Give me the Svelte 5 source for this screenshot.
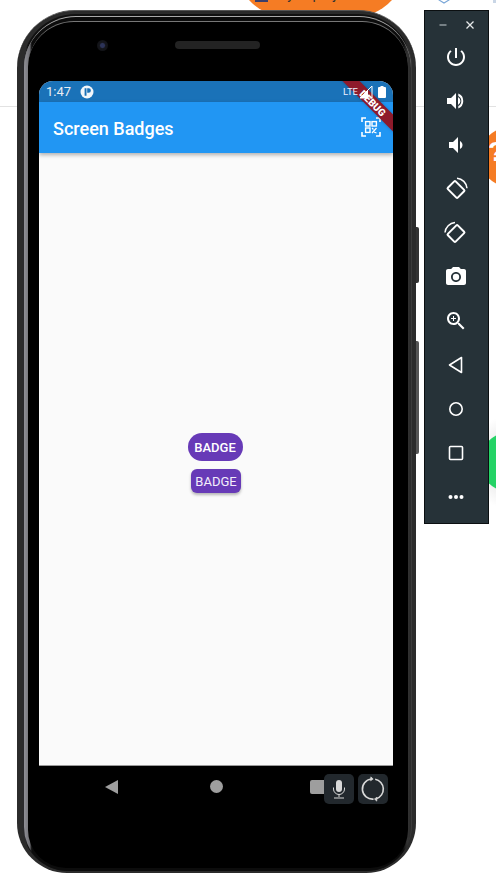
<script>
  const rows = ['power','up','down','rotL','rotR','camera','zoom','back','home','square','more'];
</script>

<div class="stage">
  <div class="rule"></div>
  <div class="blob orange-top">
    <span class="blob-icon"></span>
    <span class="blob-text">Sync project</span>
  </div>
  <svg class="hex" viewBox="0 0 12 12"><path d="M1 -3 L6 -6 L11 -3 V0 L6 3 L1 0Z" fill="#fff" stroke="#7aa7d8" stroke-width="1.2"/></svg>
  <div class="speck"></div>
  <div class="blob orange-right"><span>?</span></div>
  <div class="green-glow"></div>
  <div class="blob green"></div>

  <div class="side-btn power-btn"></div>
  <div class="side-btn vol-btn"></div>

  <div class="phone">
    <div class="ring-a">
      <div class="ring-b">
        <div class="ring-c">
          <div class="top-bezel">
            <div class="camera"></div>
            <div class="speaker"></div>
          </div>

          <div class="screen">
            <div class="status">
              <span class="time">1:47</span>
              <svg class="notif" viewBox="0 0 14 14"><circle cx="7" cy="7" r="6.5" fill="#f2f6fa"/><path d="M4.6 3.2h1.9v7.6H4.6z M7.2 3.2h1.4a2.3 2.3 0 0 1 0 4.6H7.2z" fill="#1a70b5"/></svg>
              <span class="grow"></span>
              <span class="lte">LTE</span>
              <svg class="signal" viewBox="0 0 14 14"><path d="M13 1V13H1Z" fill="none" stroke="#fff" stroke-width="1"/><path d="M9 5V13H1Z" fill="#fff"/></svg>
              <svg class="battery" viewBox="0 0 8 12"><path d="M2.5 0h3v1H7a1 1 0 0 1 1 1v9a1 1 0 0 1-1 1H1a1 1 0 0 1-1-1V2a1 1 0 0 1 1-1h1.5z" fill="#fff"/></svg>
            </div>
            <header class="appbar">
              <h1>Screen Badges</h1>
              <svg class="qr" viewBox="0 0 20 20" fill="none" stroke="#fff">
                <path d="M1 5V1H5 M15 1H19V5 M1 15V19H5 M15 19H19V15" stroke-width="1.6"/>
                <rect x="4.6" y="4.6" width="4.4" height="4.4" stroke-width="1.4"/>
                <rect x="11" y="4.6" width="4.4" height="4.4" stroke-width="1.4"/>
                <rect x="4.6" y="11" width="4.4" height="4.4" stroke-width="1.4"/>
                <path d="M11 11l1.5 1.5M15.5 11l-4.5 5M13 15l2.5 1" stroke-width="1.2"/>
              </svg>
            </header>
            <main class="body">
              <span class="badge pill">BADGE</span>
              <span class="badge rounded">BADGE</span>
            </main>
            <div class="ribbon"><span>DEBUG</span></div>
          </div>

          <nav class="nav">
            <svg class="nav-back" viewBox="0 0 13 14"><path d="M13 0V14L0 7Z" fill="#9e9e9e"/></svg>
            <span class="nav-home"></span>
            <span class="nav-square"></span>
          </nav>
          <div class="floats">
            <div class="float">
              <svg viewBox="0 0 24 24" width="24" height="24" fill="#d8d8d8">
                <rect x="9" y="3" width="6" height="12" rx="3"/>
                <path d="M6.5 10.5v1.5a5.5 5.5 0 0 0 11 0v-1.5" fill="none" stroke="#d8d8d8" stroke-width="1"/>
                <path d="M11.5 17.5h1V20h-1z M7 20.5h10v1H7z"/>
              </svg>
            </div>
            <div class="float">
              <svg viewBox="0 0 24 24" width="26" height="26" fill="none" stroke="#d8d8d8" stroke-width="1.5">
                <path d="M10.5 2.8A9.3 9.3 0 0 0 12.5 21.3"/>
                <path d="M15 21A9.3 9.3 0 0 0 14 3"/>
                <path d="M10 0.8l2.2 2-2.4 1.6z M15.5 23.2l-2.2-2 2.4-1.6z" fill="#d8d8d8" stroke-width="0.6"/>
              </svg>
            </div>
          </div>
        </div>
      </div>
    </div>
  </div>

  <aside class="panel">
    <div class="win">
      <svg viewBox="0 0 10 10" width="10" height="10"><path d="M1.5 5h7" stroke="#9aa3a7" stroke-width="1.4"/></svg>
      <svg viewBox="0 0 10 10" width="10" height="10"><path d="M1.5 1.5l7 7M8.5 1.5l-7 7" stroke="#e6e9ea" stroke-width="1.3"/></svg>
    </div>
    {#each rows as r}
      <div class="tool">
        <svg viewBox="0 0 24 24" width="24" height="24" fill="#fff">
          {#if r === 'power'}
            <path d="M13 3h-2v10h2V3zm4.83 2.17l-1.42 1.42C17.99 7.86 19 9.81 19 12c0 3.87-3.13 7-7 7s-7-3.13-7-7c0-2.19 1.01-4.14 2.58-5.42L6.17 5.17C4.23 6.82 3 9.26 3 12c0 4.97 4.03 9 9 9s9-4.03 9-9c0-2.74-1.23-5.18-3.17-6.83z"/>
          {:else if r === 'up'}
            <path d="M3 9v6h4l5 5V4L7 9H3z"/>
            <path d="M14.3 4.6a8 8 0 0 1 0 14.8v-2.3a5.8 5.8 0 0 0 0-10.2z M14 8v8a4.5 4.5 0 0 0 0-8z"/>
          {:else if r === 'down'}
            <path d="M18.5 12c0-1.77-1.02-3.29-2.5-4.03v8.05c1.48-.73 2.5-2.25 2.5-4.02zM5 9v6h4l5 5V4L9 9H5z"/>
          {:else if r === 'rotL'}
            <g fill="none" stroke="#fff">
              <rect x="5" y="7" width="14" height="11" rx="1" stroke-width="2" transform="rotate(45 12 12.5)"/>
              <path d="M13 1.2a11 11 0 0 1 10 10" stroke-width="1.5"/>
            </g>
          {:else if r === 'rotR'}
            <g fill="none" stroke="#fff">
              <rect x="5" y="7" width="14" height="11" rx="1" stroke-width="2" transform="rotate(-45 12 12.5)"/>
              <path d="M1 11.5a11 11 0 0 1 10-10" stroke-width="1.5"/>
            </g>
          {:else if r === 'camera'}
            <path fill-rule="evenodd" d="M9 2L7.17 4H4c-1.1 0-2 .9-2 2v12c0 1.1.9 2 2 2h16c1.1 0 2-.9 2-2V6c0-1.1-.9-2-2-2h-3.17L15 2H9zm3 15c-2.76 0-5-2.24-5-5s2.24-5 5-5 5 2.24 5 5-2.24 5-5 5z"/>
            <circle cx="12" cy="12" r="3.2"/>
          {:else if r === 'zoom'}
            <path d="M15.5 14h-.79l-.28-.27C15.41 12.59 16 11.11 16 9.5 16 5.91 13.09 3 9.5 3S3 5.91 3 9.5 5.91 16 9.5 16c1.61 0 3.09-.59 4.23-1.57l.27.28v.79l5 4.99L20.49 19l-4.99-5zm-6 0C7.01 14 5 11.99 5 9.5S7.01 5 9.5 5 14 7.01 14 9.5 11.99 14 9.5 14z"/>
            <path d="M12 10h-2v2H9v-2H7V9h2V7h1v2h2v1z"/>
          {:else if r === 'back'}
            <path d="M17.5 4.5v15L5.5 12z" fill="none" stroke="#fff" stroke-width="1.6" stroke-linejoin="round"/>
          {:else if r === 'home'}
            <circle cx="12" cy="12" r="6.2" fill="none" stroke="#fff" stroke-width="1.6"/>
          {:else if r === 'square'}
            <rect x="5.5" y="5.5" width="13" height="13" rx="1" fill="none" stroke="#fff" stroke-width="1.6"/>
          {:else}
            <circle cx="6.5" cy="12" r="2"/><circle cx="12" cy="12" r="2"/><circle cx="17.5" cy="12" r="2"/>
          {/if}
        </svg>
      </div>
    {/each}
  </aside>
</div>

<style>
  :global(body) { margin: 0; background: #fff; }
  .stage {
    position: relative;
    width: 496px;
    height: 891px;
    overflow: hidden;
    background: #fff;
    font-family: Roboto, sans-serif;
  }
  .rule { position: absolute; left: 0; right: 0; top: 106px; height: 1px; background: #e2e2e2; }
  .blob { position: absolute; }
  .orange-top {
    left: 241px; top: -60px; width: 159px; height: 80px;
    background: #f57c24;
    border-radius: 0 0 60px 60px / 0 0 40px 40px;
  }
  .blob-icon { position: absolute; left: 14px; top: 54px; width: 13px; height: 8px; background: #3a3f6b; }
  .blob-text { position: absolute; left: 38px; top: 46px; font-size: 14px; color: #333; white-space: nowrap; }
  .hex { position: absolute; left: 438px; top: 0; width: 12px; height: 12px; overflow: visible; }
  .speck { position: absolute; left: 493px; top: 0; width: 3px; height: 3px; background: #c9d6e6; }
  .orange-right {
    left: 480px; top: 127px; width: 60px; height: 60px; border-radius: 50%;
    background: #f57c24;
  }
  .orange-right span { position: absolute; left: 8px; top: 9px; font: 700 28px "Liberation Sans", sans-serif; color: #fff; }
  .green {
    left: 480px; top: 432px; width: 60px; height: 60px; border-radius: 50%;
    background: #25d366;
  }
  .green-glow {
    position: absolute; left: 470px; top: 415px; width: 80px; height: 95px; border-radius: 50%;
    background: radial-gradient(closest-side, rgba(0,0,0,.16), rgba(0,0,0,0));
  }

  .side-btn { position: absolute; background: #3a3a3a; border-radius: 0 2px 2px 0; }
  .power-btn { left: 415px; top: 227px; width: 4px; height: 56px; background: #333; }
  .vol-btn { left: 415px; top: 341px; width: 4px; height: 113px; background: #555; }

  .phone {
    position: absolute; left: 17px; top: 10px;
    width: 399px; height: 863px; box-sizing: border-box;
    padding: 3px 4px 2px 5px;
    border-radius: 58px 58px 50px 50px;
    background: #2b2b2b;
    border-top: 1px solid #555;
  }
  .ring-a {
    height: 100%; box-sizing: border-box; padding: 2px 1px 0 2px;
    border-radius: 54px 54px 46px 46px;
    background: linear-gradient(90deg, #2a2a2c 0, #2a2a2c 1%, #111 1.5%, #111 98%, #333 99%, #3c3c3c 100%);
  }
  .ring-b {
    height: 100%; box-sizing: border-box; padding: 4px 3px 3px 4px;
    border-radius: 52px 52px 44px 44px;
    background: linear-gradient(90deg, #8f8f96 0, #6f6f74 1.5%, #0c0c0c 2%, #0c0c0c 98%, #333 99%, #2a2a2a 100%);
    border-top: 1px solid #aaa;
  }
  .ring-c {
    position: relative;
    height: 100%; box-sizing: border-box;
    padding: 0 6px 0 11px;
    border-radius: 46px 46px 38px 38px;
    background: #000;
    border-top: 1px solid #777;
    display: flex; flex-direction: column;
  }
  .top-bezel { position: relative; height: 59px; flex: none; }
  .camera {
    position: absolute; left: 58px; top: 18px; width: 11px; height: 11px; border-radius: 50%;
    background: radial-gradient(circle, #2c3358 0 25%, #15161c 40%, #0e0e10 100%);
  }
  .speaker {
    position: absolute; left: 136px; top: 19px; width: 85px; height: 8px; border-radius: 4px;
    background: #232323;
  }

  .screen {
    position: relative; flex: none; width: 354px; height: 685px;
    overflow: hidden;
    border-radius: 14px 14px 0 0;
    background: #fafafa;
    border-bottom: 1px solid #9a9a9a; box-sizing: border-box;
    display: flex; flex-direction: column;
  }
  .status {
    height: 21px; flex: none; background: #1a72b8; color: #e8eef4;
    display: flex; align-items: center; padding: 0 7px;
  }
  .time { font-size: 13px; width: 34px; }
  .notif { width: 14px; height: 14px; }
  .grow { flex: 1; }
  .lte, .signal, .battery { position: relative; z-index: 3; }
  .lte { font-size: 9.5px; color: #eef; margin-right: 1px; }
  .signal { width: 14px; height: 14px; margin-right: 5px; }
  .battery { width: 8px; height: 12px; }
  .appbar {
    height: 51px; flex: none; background: #2196f3;
    box-shadow: 0 2px 4px rgba(0,0,0,.3);
    display: flex; align-items: center; justify-content: space-between;
    padding: 0 12px 0 14px; position: relative; z-index: 1;
  }
  h1 { margin: 0; padding-top: 1px; font-size: 18px; font-weight: 500; color: #fff; }
  .qr { width: 20px; height: 20px; margin-top: -2px; }
  .body {
    flex: 1; display: flex; flex-direction: column; align-items: center; justify-content: center; gap: 8px;
    padding-top: 8px;
  }
  .badge {
    display: flex; align-items: center; justify-content: center;
    color: #fff; font-size: 13px; background: #673ab7;
  }
  .pill { width: 55px; height: 28px; border-radius: 14px; font-weight: 500; margin-right: 2px; }
  .rounded {
    width: 50px; height: 24px; border-radius: 6px;
    color: #f3eefb; box-shadow: 0 2px 3px rgba(0,0,0,.28);
  }
  .ribbon {
    position: absolute; z-index: 2; left: 279px; top: 16px; width: 110px; height: 12px;
    background: #8e1a2b; transform: rotate(45deg);
    box-shadow: 0 0 3px rgba(0,0,0,.25);
    display: flex; align-items: center; justify-content: center;
    color: #fff; font-size: 10px; font-weight: 900; letter-spacing: 0;
  }
  .nav {
    position: relative; flex: 1;
    display: flex;
    align-items: flex-start;
    padding-top: 14px;
  }
  .nav-back { width: 13px; height: 14px; margin-left: 66px; }
  .nav-home { width: 13px; height: 13px; border-radius: 50%; background: #9e9e9e; margin-left: 92px; }
  .nav-square { width: 16px; height: 14px; border-radius: 2px; background: #9e9e9e; margin-left: 87px; }
  .floats {
    position: absolute; left: 296px; top: 752px; display: flex; gap: 4px;
  }
  .float {
    width: 30px; height: 30px; border-radius: 5px; background: #22282d;
    display: flex; align-items: center; justify-content: center;
  }

  .panel {
    position: absolute; left: 424px; top: 10px;
    width: 65px; height: 514px; box-sizing: border-box;
    background: #263238; border: 1px solid #0b0f11;
    padding-right: 1px;
    display: flex; flex-direction: column;
  }
  .win { height: 24px; display: flex; align-items: center; justify-content: center; gap: 17px; flex: none; padding-top: 3px; box-sizing: border-box; }
  .tool { height: 44px; flex: none; display: flex; align-items: center; justify-content: center; }
</style>
